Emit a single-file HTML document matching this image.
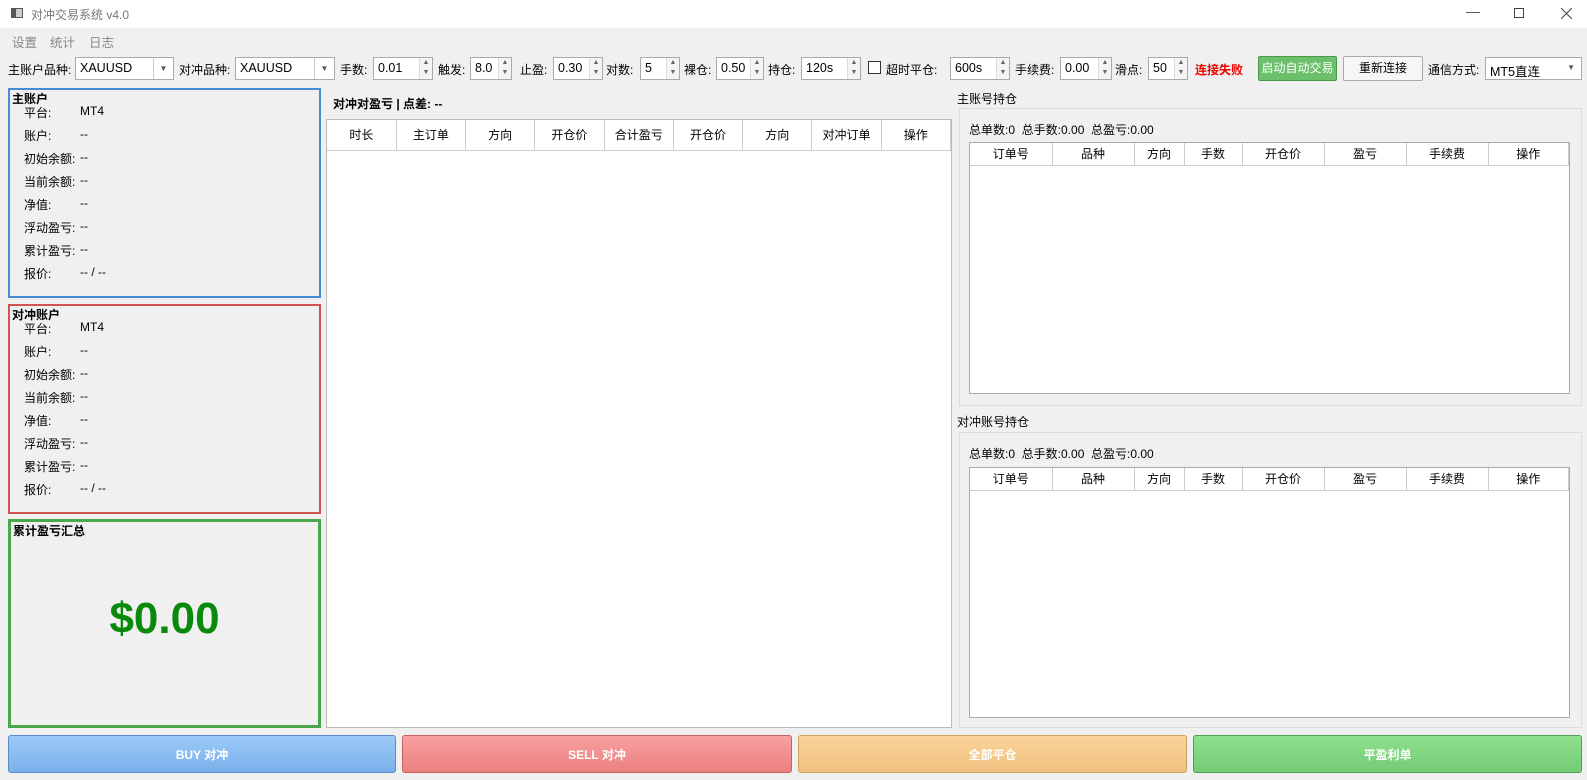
<!DOCTYPE html>
<html><head><meta charset="utf-8"><style>
*{box-sizing:border-box;margin:0;padding:0}
body{width:1587px;height:780px;background:#f0f0f0;font-family:"Liberation Sans","Noto Sans CJK SC",sans-serif;font-size:12px;color:#000;position:relative;overflow:hidden}
.a{position:absolute}
.title{left:0;top:0;width:1587px;height:28px;background:#fff;color:#777}
.menu{top:28px;left:0;width:1587px;height:22px;background:#f0f0f0;color:#888;font-size:12.5px}
.in{position:absolute;top:57px;height:23px;background:#fff;border:1px solid #aaa;padding:3px 4px;font-size:12.5px;white-space:nowrap}
.lb{position:absolute;top:61px;font-size:12px}
.spin{position:absolute;top:58px;width:13px;height:21px;font-size:7px;color:#666;line-height:10px;text-align:center;border-left:1px solid #ddd;background:#f4f4f4}
.box{position:absolute;border:2px solid}
.box .h{position:absolute;left:0;top:0;font-weight:bold;background:#f0f0f0;padding:0 2px}
.row{position:absolute;left:14px}
.row b{font-weight:normal;position:absolute;left:56px;white-space:nowrap}
table{border-collapse:collapse;width:100%;table-layout:fixed}
th{font-weight:normal;border-right:1px solid #ccc;border-bottom:1px solid #ccc;background:#fff;height:22px}
.btn{position:absolute;top:735px;height:38px;border-radius:3px;color:#fff;font-weight:bold;text-align:center;line-height:38px}
</style></head><body>
<div class="a title"><div class="a" style="left:11px;top:8px;width:12px;height:10px;border:1px solid #555;background:linear-gradient(90deg,#555 40%,#ccc 40%)"></div><span class="a" style="left:31px;top:6px">对冲交易系统 v4.0</span>
<span class="a" style="left:1466px;top:3px;font-size:14px;color:#555">—</span><span class="a" style="left:1514px;top:8px;width:10px;height:10px;border:1px solid #444"></span>
<svg class="a" style="left:1561px;top:8px" width="11" height="11"><path d="M0 0L11 11M11 0L0 11" stroke="#444" stroke-width="1"/></svg></div>
<div class="a menu"><span class="a" style="left:12px;top:4px">设置</span><span class="a" style="left:50px;top:4px">统计</span><span class="a" style="left:89px;top:4px">日志</span></div>

<span class="lb" style="left:8px">主账户品种:</span>
<div class="in" style="left:75px;width:99px">XAUUSD<span class="a" style="right:0;top:0;width:20px;height:21px;border-left:1px solid #ccc;font-size:8px;text-align:center;line-height:21px;color:#555">▼</span></div>
<span class="lb" style="left:179px">对冲品种:</span>
<div class="in" style="left:235px;width:100px">XAUUSD<span class="a" style="right:0;top:0;width:20px;height:21px;border-left:1px solid #ccc;font-size:8px;text-align:center;line-height:21px;color:#555">▼</span></div>
<span class="lb" style="left:340px">手数:</span><div class="in" style="left:373px;width:60px">0.01</div><div class="spin" style="left:419px">▲<br>▼</div>
<span class="lb" style="left:438px">触发:</span><div class="in" style="left:470px;width:42px">8.0</div><div class="spin" style="left:498px">▲<br>▼</div>
<span class="lb" style="left:520px">止盈:</span><div class="in" style="left:553px;width:50px">0.30</div><div class="spin" style="left:589px">▲<br>▼</div>
<span class="lb" style="left:606px">对数:</span><div class="in" style="left:640px;width:40px">5</div><div class="spin" style="left:666px">▲<br>▼</div>
<span class="lb" style="left:684px">裸仓:</span><div class="in" style="left:716px;width:48px">0.50</div><div class="spin" style="left:750px">▲<br>▼</div>
<span class="lb" style="left:768px">持仓:</span><div class="in" style="left:801px;width:60px">120s</div><div class="spin" style="left:847px">▲<br>▼</div>
<div class="a" style="left:868px;top:61px;width:13px;height:13px;border:1px solid #333;background:#fff"></div>
<span class="lb" style="left:886px">超时平仓:</span><div class="in" style="left:950px;width:60px">600s</div><div class="spin" style="left:996px">▲<br>▼</div>
<span class="lb" style="left:1015px">手续费:</span><div class="in" style="left:1060px;width:52px">0.00</div><div class="spin" style="left:1098px">▲<br>▼</div>
<span class="lb" style="left:1115px">滑点:</span><div class="in" style="left:1148px;width:40px">50</div><div class="spin" style="left:1174px">▲<br>▼</div>
<span class="lb" style="left:1195px;color:#e00;font-weight:bold">连接失败</span>
<div class="a" style="left:1258px;top:56px;width:79px;height:25px;background:#6cc06c;border:1px solid #4a9a4a;border-radius:2px;color:#fff;text-align:center;line-height:23px">启动自动交易</div>
<div class="a" style="left:1343px;top:56px;width:80px;height:25px;background:#f6f6f6;border:1px solid #aaa;border-radius:2px;text-align:center;line-height:23px">重新连接</div>
<span class="lb" style="left:1428px">通信方式:</span>
<div class="in" style="left:1485px;width:97px">MT5直连<span class="a" style="right:6px;top:5px;font-size:8px;color:#555">▼</span></div>

<div class="box" style="left:8px;top:88px;width:313px;height:210px;border-color:#4a8ad4"><span class="h">主账户</span>
<div class="row" style="top:14px">平台:<b>MT4</b></div><div class="row" style="top:37px">账户:<b>--</b></div><div class="row" style="top:60px">初始余额:<b>--</b></div><div class="row" style="top:83px">当前余额:<b>--</b></div><div class="row" style="top:106px">净值:<b>--</b></div><div class="row" style="top:129px">浮动盈亏:<b>--</b></div><div class="row" style="top:152px">累计盈亏:<b>--</b></div><div class="row" style="top:175px">报价:<b>-- / --</b></div></div>
<div class="box" style="left:8px;top:304px;width:313px;height:210px;border-color:#d05454"><span class="h">对冲账户</span>
<div class="row" style="top:14px">平台:<b>MT4</b></div><div class="row" style="top:37px">账户:<b>--</b></div><div class="row" style="top:60px">初始余额:<b>--</b></div><div class="row" style="top:83px">当前余额:<b>--</b></div><div class="row" style="top:106px">净值:<b>--</b></div><div class="row" style="top:129px">浮动盈亏:<b>--</b></div><div class="row" style="top:152px">累计盈亏:<b>--</b></div><div class="row" style="top:175px">报价:<b>-- / --</b></div></div>
<div class="box" style="left:8px;top:519px;width:313px;height:209px;border:3px solid #4ca64c"><span class="h">累计盈亏汇总</span>
<div class="a" style="left:0;right:0;top:72px;text-align:center;color:#0a8a0a;font-size:44px;font-weight:bold">$0.00</div></div>

<span class="a" style="left:333px;top:95px;font-weight:bold">对冲对盈亏 | 点差: --</span>
<div class="a" style="left:326px;top:119px;width:626px;height:609px;background:#fff;border:1px solid #bbb">
<table style="font-weight:bold"><tr><th style="height:30px">时长</th><th>主订单</th><th>方向</th><th>开仓价</th><th>合计盈亏</th><th>开仓价</th><th>方向</th><th>对冲订单</th><th>操作</th></tr></table></div>

<span class="a" style="left:957px;top:90px">主账号持仓</span>
<div class="a" style="left:959px;top:108px;width:623px;height:298px;border:1px solid #ddd"></div>
<span class="a" style="left:969px;top:121px">总单数:0&nbsp; 总手数:0.00&nbsp; 总盈亏:0.00</span>
<div class="a" style="left:969px;top:142px;width:601px;height:252px;background:#fff;border:1px solid #aaa">
<table><colgroup><col style="width:82px"><col style="width:82px"><col style="width:50px"><col style="width:58px"><col style="width:82px"><col style="width:82px"><col style="width:82px"><col></colgroup><tr><th>订单号</th><th>品种</th><th>方向</th><th>手数</th><th>开仓价</th><th>盈亏</th><th>手续费</th><th>操作</th></tr></table></div>

<span class="a" style="left:957px;top:413px">对冲账号持仓</span>
<div class="a" style="left:959px;top:432px;width:623px;height:296px;border:1px solid #ddd"></div>
<span class="a" style="left:969px;top:445px">总单数:0&nbsp; 总手数:0.00&nbsp; 总盈亏:0.00</span>
<div class="a" style="left:969px;top:467px;width:601px;height:251px;background:#fff;border:1px solid #aaa">
<table><colgroup><col style="width:82px"><col style="width:82px"><col style="width:50px"><col style="width:58px"><col style="width:82px"><col style="width:82px"><col style="width:82px"><col></colgroup><tr><th>订单号</th><th>品种</th><th>方向</th><th>手数</th><th>开仓价</th><th>盈亏</th><th>手续费</th><th>操作</th></tr></table></div>

<div class="btn" style="left:8px;width:388px;background:linear-gradient(#9ccaf8,#7ab0ea);border:1px solid #5a8ac8">BUY 对冲</div>
<div class="btn" style="left:402px;width:390px;background:linear-gradient(#f8a0a0,#ec8080);border:1px solid #c86060">SELL 对冲</div>
<div class="btn" style="left:798px;width:389px;background:linear-gradient(#fad39a,#f0c080);border:1px solid #d0a060">全部平仓</div>
<div class="btn" style="left:1193px;width:389px;background:linear-gradient(#8ee08e,#74cc74);border:1px solid #50a050">平盈利单</div>
</body></html>
